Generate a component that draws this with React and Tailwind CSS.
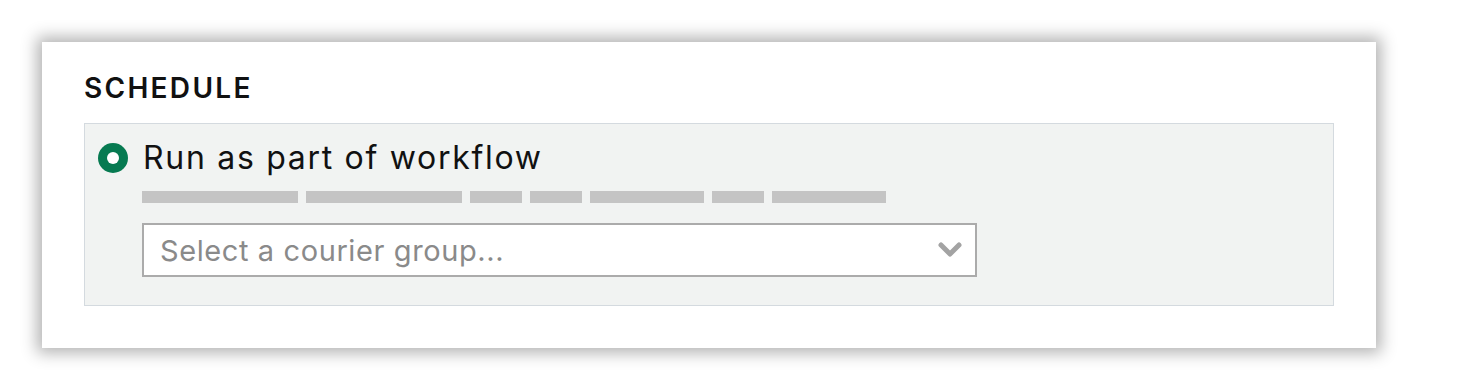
export default function App() {
  const bars = [156, 156, 52, 52, 114, 52, 114];
  return (
    <div
      className="w-[1476px] h-[390px] bg-white pt-[42px] pl-[42px]"
      style={{ fontFamily: 'Inter, "Noto Sans", sans-serif' }}
    >
      <div className="w-[1334px] h-[306px] bg-white shadow-[0_0_15px_5px_rgba(0,0,0,0.3)] px-[42px] pt-[32px]">
        <div className="text-[28px] leading-[28px] font-semibold text-[#111111] tracking-[2.3px]">SCHEDULE</div>
        <div className="mt-[21px] h-[183px] border border-[#d4dadf] bg-[#f1f3f2] pl-[13px] pt-[18px]">
          <div className="flex items-center gap-[15px]">
            <div className="w-[30px] h-[30px] rounded-full bg-[#067a51] flex items-center justify-center">
              <div className="w-[12px] h-[12px] rounded-full bg-white" />
            </div>
            <div className="text-[32px] leading-[32px] text-[#111111] tracking-[1.7px]">Run as part of workflow</div>
          </div>
          <div className="ml-[44px] mt-[17px] flex gap-[8px]">
            {bars.map((w, i) => (
              <div key={i} className="h-[12px] bg-[#c4c4c4]" style={{ width: w }} />
            ))}
          </div>
          <div className="ml-[44px] mt-[20px] w-[835px] h-[54px] border-2 border-[#ababab] bg-white flex items-center justify-between pl-[16px] pr-[13px]">
            <span className="text-[29px] leading-[29px] text-[#8a8a8a] tracking-[0.6px]">Select a courier group...</span>
            <svg width="24" height="16" viewBox="0 0 24 16">
              <polyline points="3,3 12,12 21,3" fill="none" stroke="#a3a3a3" strokeWidth="5" strokeLinejoin="round" strokeLinecap="round" />
            </svg>
          </div>
        </div>
      </div>
    </div>
  );
}
